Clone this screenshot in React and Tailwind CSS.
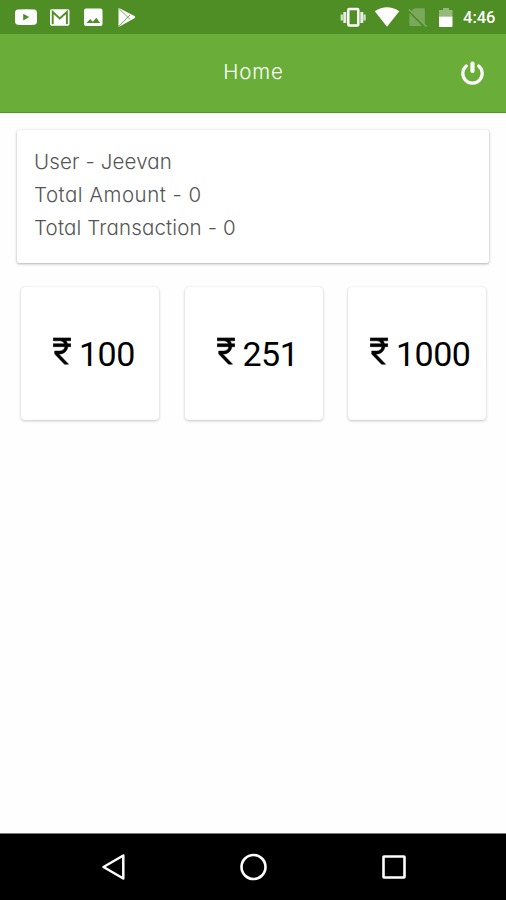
const heading = "font-['Inter','Open_Sans',sans-serif] font-light [font-feature-settings:'cv11','ss03']";

function StatusBar() {
  return (
    <div className="flex h-[34px] items-start justify-between bg-[#4f8d25]">
      <svg className="h-[34px] w-[150px]" viewBox="0 0 150 34" fill="#fff">
        <path
          fillRule="evenodd"
          d="M18 9.6Q26 8.8 34 9.6Q37 9.8 37 13V21.5Q37 24.6 34 24.8Q26 25.4 18 24.8Q15 24.6 15 21.5V13Q15 9.8 18 9.6ZM23.2 13.7V20.5L29.2 17.1Z"
        />
        <rect x="50" y="9.3" width="19.5" height="16.4" rx="1.6" />
        <path d="M52.7 24V12L59.8 18.4L66.9 12V24" fill="none" stroke="#4f8d25" strokeWidth="1.9" />
        <path
          fillRule="evenodd"
          d="M86 8.5H100.500Q102.500 8.500 102.500 10.500V24Q102.500 26 100.500 26H86Q84 26 84 24V10.500Q84 8.500 86 8.500ZM86.500 23H100.200L96.300 17.700L92.800 21.700L90.100 19Z"
        />
        <path d="M118.500 8.400Q119 7.800 120 8.400L134 15.800Q136.500 17.200 134 18.600L120 26.300Q119 26.900 118.500 26.200Z" />
        <path d="M119 8.600L130 19.400M119 26L130 15" fill="none" stroke="#4f8d25" strokeWidth="0.9" opacity=".85" />
      </svg>
      <div className="flex">
        <svg className="h-[34px] w-[123px]" viewBox="0 0 123 34" fill="#fff">
          <rect x="8.300" y="8.900" width="10" height="16.600" rx="1" fill="none" stroke="#fff" strokeWidth="2.500" />
          <path d="M4.800 12V23M21.800 12V23" stroke="#fff" strokeWidth="3" opacity=".85" />
          <path d="M1.800 14.500V20.500M24.600 14.500V20.500" stroke="#fff" strokeWidth="2.400" opacity=".7" />
          <path d="M34.800 11.300Q47 3.200 59.300 11.300L47 26.700Z" />
          <path
            d="M74.500 8.300H84.800V24L71.500 10.700ZM69.400 13L82 26H70.500Q69.400 26 69.400 25Z"
            opacity=".25"
          />
          <path d="M69 9.500L86.500 26.500" stroke="#c0d8ad" strokeWidth="1.400" opacity=".45" />
          <path d="M103 8H109V10H112.500V16.500H99V10H103Z" opacity=".4" />
          <path d="M99 16.500H112.500V26Q112.500 27 111.500 27H100Q99 27 99 26Z" />
        </svg>
        <span className="w-[43px] pt-[7px] font-['Roboto',sans-serif] text-[16.500px] leading-[22px] font-medium text-white">4:46</span>
      </div>
    </div>
  );
}

function Header() {
  return (
    <header className="grid h-[79px] grid-cols-[1fr_auto_1fr] items-center border-b border-[#559329] bg-[#6aae39]">
      <span />
      <h1 className={`${heading} pb-[2px] pl-[1px] text-[20.500px] leading-6 tracking-[0.900px] text-white`}>Home</h1>
      <svg className="mr-[19px] h-7 w-7 justify-self-end" viewBox="0 0 28 28" fill="none" stroke="#fff" strokeLinecap="round">
        <path d="M7.300 7A9.700 9.700 0 1 0 19.700 7" strokeWidth="3.200" />
        <path d="M13.500 4.500V12" strokeWidth="4.200" />
      </svg>
    </header>
  );
}

const amounts = [
  { value: "100", pad: "pl-[32px]" },
  { value: "251", pad: "pl-[32px]" },
  { value: "1000", pad: "pl-[22px]" },
];

export default function App() {
  return (
    <div className="flex h-[900px] w-[506px] flex-col overflow-hidden bg-[#fefefe]">
      <StatusBar />
      <Header />
      <main className="flex-1">
        <section
          className={`${heading} mx-[17px] mt-[17px] h-[133px] rounded-[2px] bg-white pt-[15px] pl-[17px] text-[20.500px] leading-[33px] text-[#555] shadow-[0_1px_3px_rgba(0,0,0,0.300),0_0_1px_rgba(0,0,0,0.150)]`}
        >
          <p className="tracking-[0.150px]">User - Jeevan</p>
          <p className="tracking-[0.480px]">Total Amount - 0</p>
          <p className="tracking-[0.150px]">Total Transaction - 0</p>
        </section>
        <div className="mt-[24px] ml-[21px] flex gap-[25.500px]">
          {amounts.map(({ value, pad }) => (
            <div
              key={value}
              className={`${pad} flex h-[133px] w-[138px] shrink-0 items-center rounded-[4px] bg-white shadow-[0_1px_3px_rgba(0,0,0,0.220),0_0_1px_rgba(0,0,0,0.120)]`}
            >
              <svg className="mb-[5px] h-7 w-[18px] shrink-0" viewBox="5.850 2.400 12.300 19.130" fill="#000" stroke="#000" strokeWidth="0.350">
                <path d="M13.660 7c-.56-1.180-1.760-2-3.160-2H6V3h12v2h-3.260c.48.58.84 1.260 1.050 2H18v2h-2.020c-.25 2.800-2.610 5-5.480 5h-.73l6.730 7h-2.770L7 14v-2h3.500c1.760 0 3.220-1.300 3.460-3H6V7h7.660z" />
              </svg>
              <span className="ml-[8px] pt-[1px] font-['Roboto',sans-serif] text-[34px] leading-10 tracking-[-0.500px] text-black">{value}</span>
            </div>
          ))}
        </div>
      </main>
      <nav className="flex h-[67px] items-center justify-between border-t border-[#777] bg-black px-[100px]">
        <svg className="h-7 w-7" viewBox="0 0 28 28" fill="none" stroke="#fff" strokeWidth="2.500">
          <path d="M23.300 2.500V25.500L3.500 14Z" strokeLinejoin="round" />
        </svg>
        <svg className="h-7 w-7" viewBox="0 0 28 28" fill="none" stroke="#fff" strokeWidth="2.600">
          <circle cx="14.500" cy="14" r="12" />
        </svg>
        <svg className="h-7 w-7" viewBox="0 0 28 28" fill="none" stroke="#fff" strokeWidth="2.600">
          <rect x="5.500" y="3.500" width="21" height="21" rx="0.500" />
        </svg>
      </nav>
    </div>
  );
}
